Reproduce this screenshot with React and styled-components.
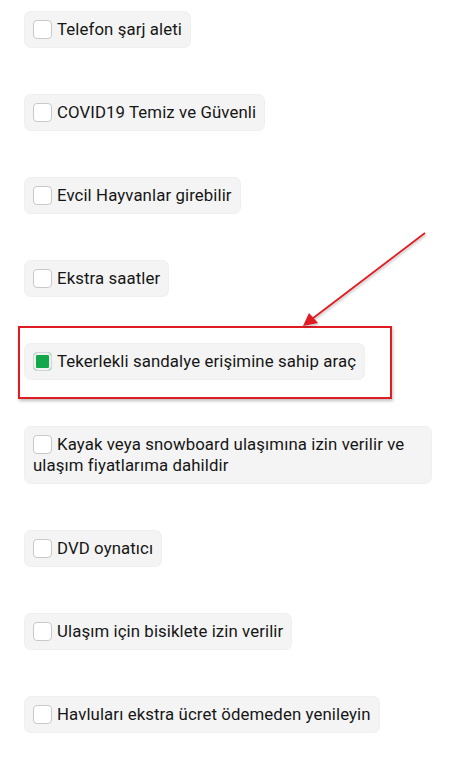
import React, { useState } from "react";
import styled, { createGlobalStyle } from "styled-components";

const GlobalStyle = createGlobalStyle`
	html, body {
		margin: 0;
		padding: 0;
		background: #ffffff;
	}
	body {
		font-family: Roboto, "Noto Sans", Arial, sans-serif;
		color: #161616;
	}
`;

const Page = styled.div`
	position: relative;
	width: 457px;
	min-height: 766px;
	box-sizing: border-box;
	padding: 12px 26px 0 25px;
	display: flex;
	flex-direction: column;
	align-items: flex-start;
	gap: 48px;
`;

const Chip = styled.label`
	display: inline-block;
	max-width: 100%;
	box-sizing: border-box;
	padding: 7px 8px;
	background: #f4f4f4;
	border-radius: 6px;
	box-shadow: 0 0 0 1px #efefef;
	font-size: 16.8px;
	line-height: 21px;
	letter-spacing: 0.1px;
	cursor: pointer;
`;

const Box = styled.span`
	display: inline-block;
	width: 19px;
	height: 19px;
	margin-right: 5px;
	vertical-align: -4px;
	border-radius: 4px;
	box-sizing: border-box;
	border: 1px solid ${(p) => (p.$checked ? "#cfd8d2" : "#c9c9c9")};
	background: ${(p) => (p.$checked ? "#12a84a" : "#ffffff")};
	box-shadow: ${(p) => (p.$checked ? "inset 0 0 0 2px #f1f1f1" : "none")};
`;

const Highlight = styled.div`
	width: 374px;
	box-sizing: border-box;
	margin: -18px 0 -20px -7px;
	padding: 16px 0 18px 5px;
	border: 2px solid #e01b22;
	box-shadow: 1px 2px 3px rgba(0, 0, 0, 0.25);
`;

const Arrow = styled.svg`
	position: absolute;
	left: 0;
	top: 0;
	width: 457px;
	height: 766px;
	pointer-events: none;
	overflow: visible;
`;

const items = [
	"Telefon şarj aleti",
	"COVID19 Temiz ve Güvenli",
	"Evcil Hayvanlar girebilir",
	"Ekstra saatler",
	"Tekerlekli sandalye erişimine sahip araç",
	"Kayak veya snowboard ulaşımına izin verilir ve ulaşım fiyatlarıma dahildir",
	"DVD oynatıcı",
	"Ulaşım için bisiklete izin verilir",
	"Havluları ekstra ücret ödemeden yenileyin",
];

export default function App() {
	const [checked, setChecked] = useState({ 4: true });

	const renderChip = (text, index) => (
		<Chip
			key={index}
			onClick={() => setChecked({ ...checked, [index]: !checked[index] })}
		>
			<Box $checked={!!checked[index]} />
			{text}
		</Chip>
	);

	return (
		<>
			<GlobalStyle />
			<Page>
				{items.map((text, index) =>
					index === 4 ? (
						<Highlight key={index}>{renderChip(text, index)}</Highlight>
					) : (
						renderChip(text, index)
					)
				)}
				<Arrow viewBox="0 0 457 766">
					<defs>
						<filter id="sh" x="-20%" y="-20%" width="140%" height="140%">
							<feDropShadow dx="1" dy="1.5" stdDeviation="1" floodColor="#000" floodOpacity="0.25" />
						</filter>
					</defs>
					<g filter="url(#sh)">
						<line x1="425" y1="233" x2="312" y2="319" stroke="#e01b22" strokeWidth="1.8" />
						<polygon points="303,326 309,313 318,323" fill="#e01b22" />
					</g>
				</Arrow>
			</Page>
		</>
	);
}
